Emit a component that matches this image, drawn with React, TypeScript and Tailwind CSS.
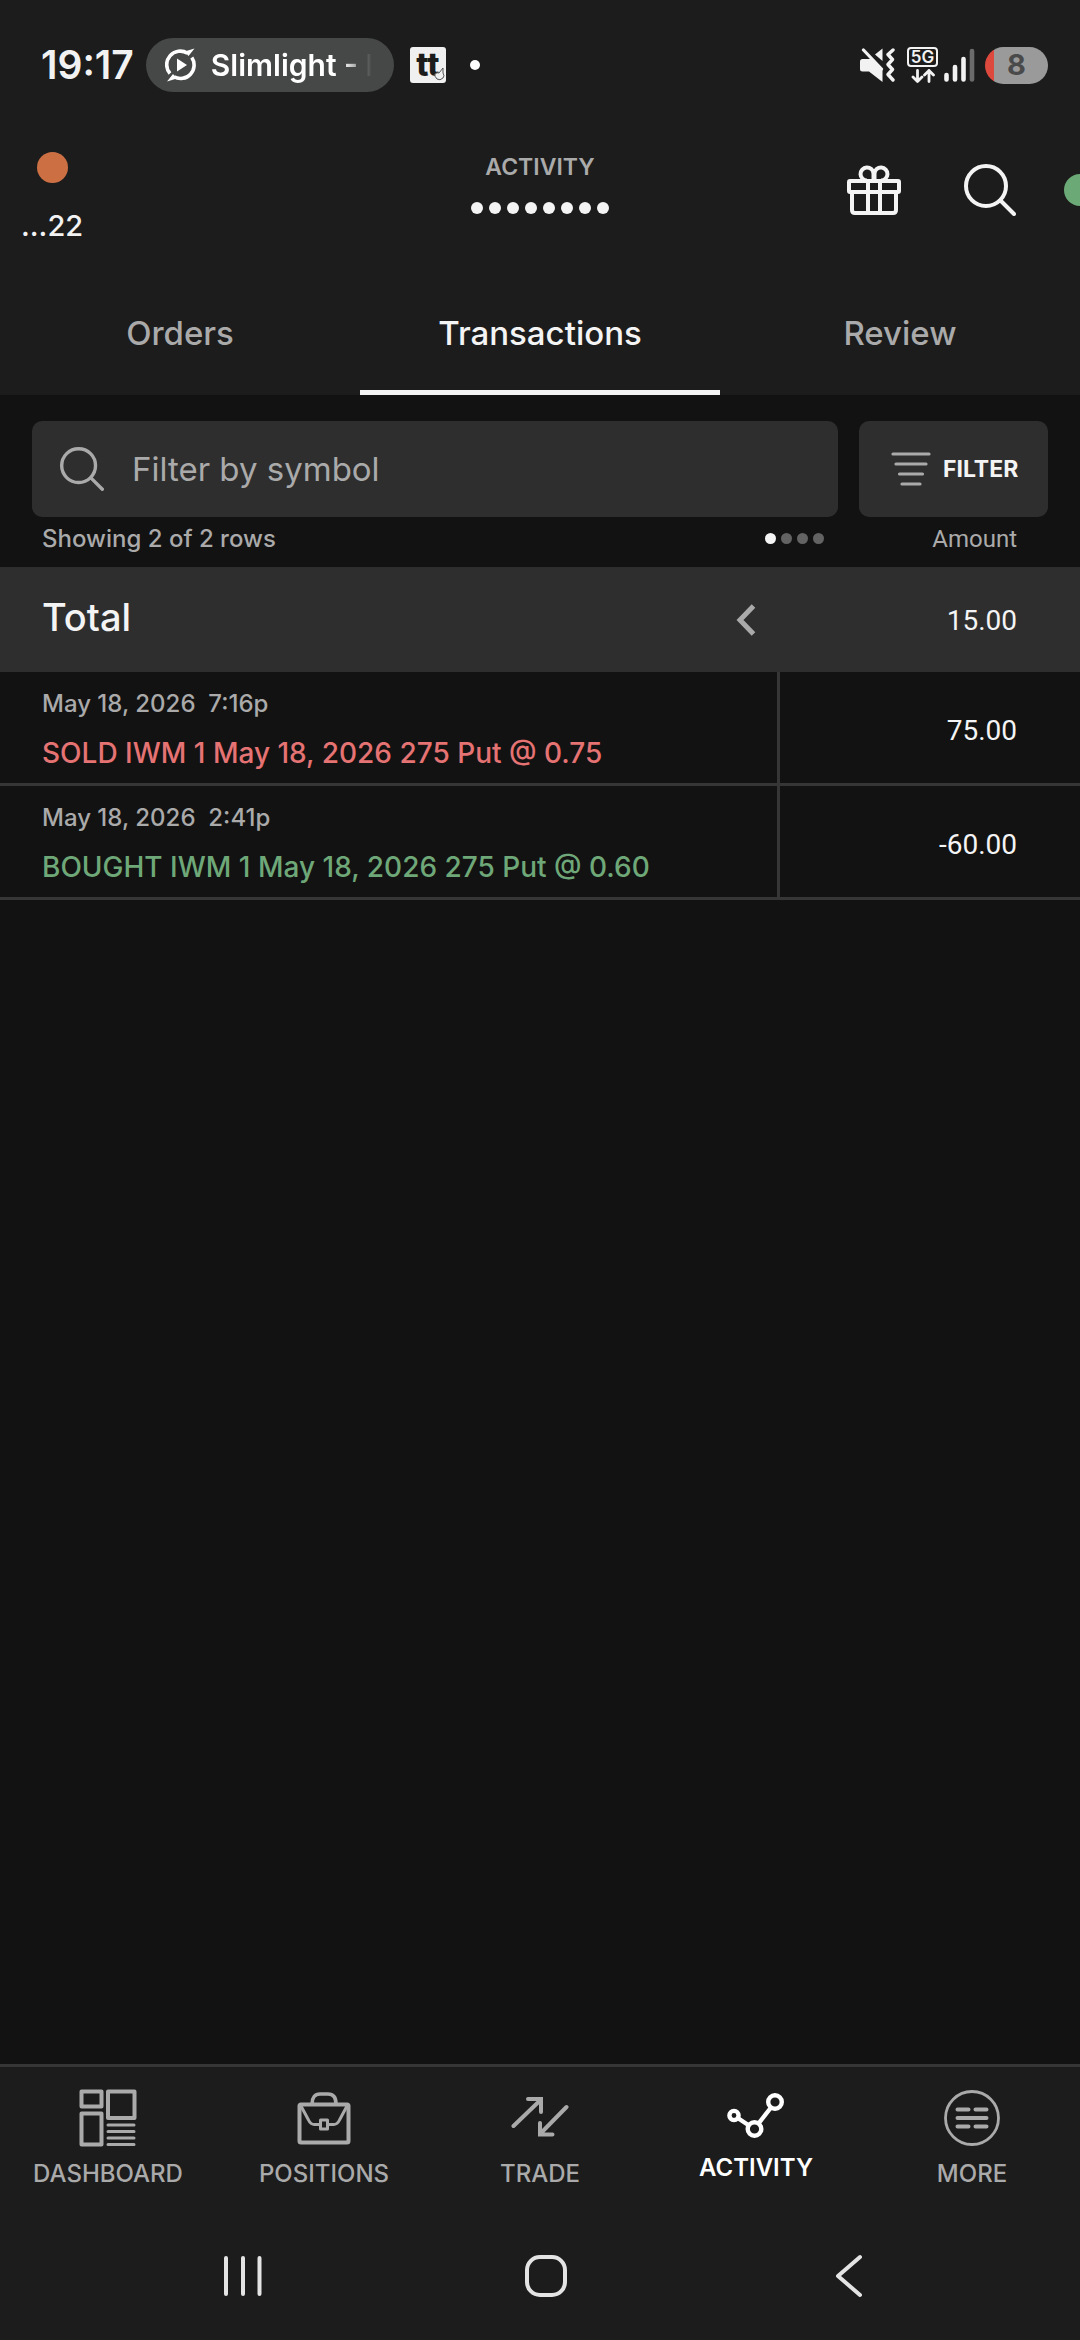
import { useState, type ReactNode } from 'react'

// ─── Data ──────────────────────────────────────────────────────────
type Transaction = {
  id: number
  date: string
  time: string
  side: 'SOLD' | 'BOUGHT'
  detail: string
  amount: string
}

const transactions: Transaction[] = [
  { id: 1, date: 'May 18, 2026', time: '7:16p', side: 'SOLD', detail: 'IWM 1 May 18, 2026 275 Put @ 0.75', amount: '75.00' },
  { id: 2, date: 'May 18, 2026', time: '2:41p', side: 'BOUGHT', detail: 'IWM 1 May 18, 2026 275 Put @ 0.60', amount: '-60.00' },
]

const tabs = ['Orders', 'Transactions', 'Review']

// ─── Icons ─────────────────────────────────────────────────────────
function SearchIcon({ className }: { className: string }) {
  return (
    <svg viewBox="0 0 52 52" fill="none" stroke="currentColor" strokeWidth="4" strokeLinecap="round" className={className}>
      <circle cx="22" cy="22" r="20" />
      <path d="M36.5 36.5 50 50" />
    </svg>
  )
}

function GiftIcon() {
  return (
    <svg viewBox="0 0 54 50" fill="none" stroke="currentColor" strokeWidth="4" strokeLinejoin="round" className="h-[50px] w-[54px]">
      <rect x="2" y="16" width="50" height="11" rx="1" />
      <path d="M5 27v18q0 3 3 3h38q3 0 3-3V27M21 16v32M33 16v32" />
      <path d="M20 15.5a6.500 6.500 0 1 1 6.500-7v7M34 15.5a6.500 6.500 0 1 0-6.500-7v7" />
    </svg>
  )
}

function DashboardIcon() {
  return (
    <svg viewBox="0 0 58 58" fill="none" stroke="currentColor" strokeWidth="4" strokeLinejoin="round" className="h-[58px] w-[58px]">
      <rect x="2.500" y="2.500" width="20" height="15" />
      <rect x="2.500" y="24.500" width="20" height="31" />
      <rect x="29" y="2.500" width="26.500" height="26.500" />
      <path d="M29 36h26M29 42.500h26M29 49h26M29 55.500h26" strokeWidth="3" strokeLinecap="round" />
    </svg>
  )
}

function PositionsIcon() {
  return (
    <svg viewBox="0 0 58 58" fill="none" stroke="currentColor" strokeWidth="4" strokeLinejoin="round" className="h-[58px] w-[58px]">
      <rect x="4.500" y="15.500" width="49" height="38" rx="1.500" />
      <path d="M17 15C17 8.500 20 5 25 5h8c5 0 8 3.500 8 10" strokeWidth="3.600" />
      <path d="M6 17l7.500 14c1.500 3.300 3 4.500 6 4.500H25M52 17l-7.500 14c-1.500 3.300-3 4.500-6 4.500H33" strokeWidth="3" />
      <rect x="25.500" y="31" width="7" height="9" strokeWidth="3" />
    </svg>
  )
}

function TradeIcon() {
  return (
    <svg viewBox="0 0 58 58" fill="none" stroke="currentColor" strokeWidth="4" strokeLinecap="round" className="h-[58px] w-[58px]">
      <path d="M2.500 37 29 11.500M17 10h13v13" />
      <path d="M55.500 18 30 44M29 34v11.500h12.500" />
    </svg>
  )
}

function ActivityIcon() {
  return (
    <svg viewBox="1 0 58 52" fill="none" stroke="currentColor" strokeWidth="4.400" className="h-[52px] w-[58px]">
      <circle cx="8" cy="26.500" r="4.600" />
      <circle cx="28.500" cy="40" r="6.800" />
      <circle cx="49" cy="13" r="6.800" />
      <path d="M12.500 29.500 23 36.500M32.500 34.500 45 18.500" />
    </svg>
  )
}

function MoreIcon() {
  return (
    <svg viewBox="0 0 58 58" fill="none" stroke="currentColor" strokeWidth="4" strokeLinecap="round" className="h-[58px] w-[58px]">
      <circle cx="29" cy="29" r="26.500" strokeWidth="2.800" />
      <path d="M14.500 20.500h11M32.500 20.500h11M14.500 29h29M14.500 37.500h11M32.500 37.500h11" />
    </svg>
  )
}

function MuteIcon() {
  return (
    <svg viewBox="0 0 35 34" fill="currentColor" className="h-[34px] w-[35px]">
      <path d="M2.500 11H11l11.500 10.500V34L9 23.500H2.500Q0 23.500 0 21v-7.500Q0 11 2.500 11zM22.500.5v12.500L15 6.500z" />
      <path d="M3.500 2 21.500 21" fill="none" stroke="currentColor" strokeWidth="3.200" strokeLinecap="round" />
      <path d="M33 2l-5 4.500 4.500 5-4.500 5 4.500 5-4.500 5 5 5.500" fill="none" stroke="currentColor" strokeWidth="3.400" strokeLinecap="round" strokeLinejoin="round" />
    </svg>
  )
}

function DataArrows() {
  return (
    <svg viewBox="0 0 24 14" fill="none" stroke="currentColor" strokeWidth="2.800" strokeLinecap="round" strokeLinejoin="round" className="h-[14px] w-[24px]">
      <path d="M6.500 1.500v11M2 8l4.500 4.500L11 8M18 12.500v-11M13.500 6 18 1.500 22.500 6" />
    </svg>
  )
}

function SignalIcon() {
  return (
    <svg viewBox="0 0 31 34" stroke="currentColor" strokeWidth="4.600" strokeLinecap="round" className="h-[34px] w-[31px]">
      <path d="M2.500 27v4.500M11 19v12.500M19.500 11v20.500" />
      <path d="M28 3v28.500" className="text-[#6b6b6b]" />
    </svg>
  )
}

function MediaIcon() {
  return (
    <svg viewBox="0 0 32 34" fill="none" stroke="currentColor" strokeWidth="3.600" className="h-[34px] w-[32px]">
      <path d="M22.500 5.300A13.500 13.500 0 0 0 5 25.500M9 28.800A13.500 13.500 0 0 0 26.800 9.500" />
      <path d="M19.500 3.500 29.500.5 23.500 8zM12 30.500 2 33.500 8 26z" fill="currentColor" stroke="none" />
      <path d="M12 10.500v13l10-6.500z" fill="currentColor" stroke="none" />
    </svg>
  )
}

// ─── Status bar ────────────────────────────────────────────────────
function StatusBar() {
  return (
    <div className="flex h-[130px] items-center justify-between pl-[41px] pr-8 text-[#f2f2f2]">
      <div className="flex items-center">
        <span className="text-[39px] font-semibold leading-[40px]">19:17</span>
        <div className="ml-3 flex h-[54px] w-[248px] items-center gap-[14px] rounded-full bg-[#464747] pl-[19px] text-white">
          <MediaIcon />
          <span className="w-[164px] overflow-hidden whitespace-nowrap text-[30px] font-semibold leading-[40px] [mask-image:linear-gradient(to_right,black_80%,transparent_98%)]">
            Slimlight - I
          </span>
        </div>
        <div className="relative ml-4 flex h-9 w-9 items-center justify-center rounded-[3px] bg-[#f0f0f0] text-[32px] font-extrabold leading-[32px] text-[#1c1c1c]">
          tt
          <svg viewBox="0 0 12 14" fill="#f0f0f0" stroke="#555555" strokeWidth="1" className="absolute bottom-[2px] right-[1px] h-[14px] w-3">
            <path d="M6 6 10 1v5q2 3 0 5-3 3-6 1Q1 9 2 7q2-2 4-1z" />
          </svg>
        </div>
        <span className="ml-6 h-[10px] w-[10px] rounded-full bg-white" />
      </div>
      <div className="flex items-center">
        <MuteIcon />
        <div className="ml-3 flex w-[31px] flex-col items-center gap-[2px]">
          <span className="flex h-5 w-[31px] items-center justify-center rounded-[4px] border-2 border-[#f2f2f2] text-[17px] font-semibold leading-[16px]">
            5G
          </span>
          <DataArrows />
        </div>
        <div className="ml-[6px]">
          <SignalIcon />
        </div>
        <div className="ml-[10px] flex h-[37px] w-[63px] items-center justify-center rounded-full bg-[linear-gradient(to_right,#dd4a3d_15%,#9a9a9a_15%)] text-[29px] font-bold leading-[32px] text-[#4a4a4a]">
          8
        </div>
      </div>
    </div>
  )
}

// ─── Header ────────────────────────────────────────────────────────
function Header() {
  return (
    <header className="grid h-[140px] grid-cols-3 items-start overflow-hidden pt-[22px]">
      <button className="flex flex-col items-start gap-[27px] pl-[21px] text-[29px] font-medium leading-[32px] text-[#f2f2f2]">
        <span className="ml-4 h-[31px] w-[31px] rounded-full bg-[#cc7044]" />
        ...22
      </button>
      <div className="flex flex-col items-center gap-5">
        <h1 className="text-[23px] font-semibold leading-[30px] text-[#aaaaaa]">ACTIVITY</h1>
        <div className="flex gap-[6px]">
          {Array.from({ length: 8 }, (_, i) => (
            <span key={i} className="h-3 w-3 rounded-full bg-[#f4f4f4]" />
          ))}
        </div>
      </div>
      <div className="-mr-4 flex items-center justify-end gap-12 pt-3 text-[#f4f4f4]">
        <button aria-label="Rewards">
          <GiftIcon />
        </button>
        <button aria-label="Search" className="pl-[15px]">
          <SearchIcon className="h-[52px] w-[52px]" />
        </button>
        <span className="h-8 w-8 rounded-full bg-[#6ba977]" />
      </div>
    </header>
  )
}

// ─── Bottom navigation ─────────────────────────────────────────────
const navItems: { label: string; icon: ReactNode }[] = [
  { label: 'DASHBOARD', icon: <DashboardIcon /> },
  { label: 'POSITIONS', icon: <PositionsIcon /> },
  { label: 'TRADE', icon: <TradeIcon /> },
  { label: 'ACTIVITY', icon: <ActivityIcon /> },
  { label: 'MORE', icon: <MoreIcon /> },
]

function BottomNav() {
  return (
    <nav className="grid h-[148px] grid-cols-5 items-start border-t-[3px] border-[#363636] pt-[22px]">
      {navItems.map((item) => {
        const isActive = item.label === 'ACTIVITY'
        return (
          <a
            key={item.label}
            href={`#${item.label.toLowerCase()}`}
            className={`flex flex-col items-center gap-3 text-[24px] leading-[30px] ${
              isActive ? 'font-semibold text-white' : 'font-medium text-[#aaaaaa]'
            }`}
          >
            {item.icon}
            {item.label}
          </a>
        )
      })}
    </nav>
  )
}

function SystemNav() {
  return (
    <div className="flex h-32 items-center justify-around pl-[92px] pr-20 text-[#e4e4e4]">
      <button aria-label="Recents">
        <svg viewBox="0 0 44 44" fill="none" stroke="currentColor" strokeWidth="4" strokeLinecap="round" className="h-11 w-11">
          <path d="M5 4v36M22 4v36M38.500 4v36" />
        </svg>
      </button>
      <button aria-label="Home">
        <svg viewBox="0 0 44 44" fill="none" stroke="currentColor" strokeWidth="4" className="h-11 w-11">
          <rect x="3" y="3" width="38" height="38" rx="13" />
        </svg>
      </button>
      <button aria-label="Back">
        <svg viewBox="0 0 44 44" fill="none" stroke="currentColor" strokeWidth="4" strokeLinecap="round" strokeLinejoin="round" className="h-11 w-11">
          <path d="M33 3 11 22l22 19" />
        </svg>
      </button>
    </div>
  )
}

// ─── Transactions table ────────────────────────────────────────────
function TransactionsTable() {
  return (
    <table className="w-full border-separate border-spacing-0 text-left">
      <thead>
        <tr className="text-[24px] leading-[30px] text-[#aaaaaa]">
          <th className="p-0 pl-[42px] font-medium">
            <div className="flex h-[50px] items-start justify-between pt-[7px]">
              Showing {transactions.length} of {transactions.length} rows
              <span className="mr-[-44px] flex gap-[5px] pt-[9px]">
                <span className="h-[11px] w-[11px] rounded-full bg-[#f4f4f4]" />
                <span className="h-[11px] w-[11px] rounded-full bg-[#636363]" />
                <span className="h-[11px] w-[11px] rounded-full bg-[#636363]" />
                <span className="h-[11px] w-[11px] rounded-full bg-[#636363]" />
              </span>
            </div>
          </th>
          <th className="w-[300px] p-0 pr-[63px] text-right font-['Roboto',sans-serif] font-normal">
            <div className="h-[50px] pt-[7px]">Amount</div>
          </th>
        </tr>
      </thead>
      <tbody>
        <tr className="h-[105px] bg-[#2e2e2e] text-[#f4f4f4]">
          <th className="p-0 pl-[42px] pr-6 font-medium">
            <div className="flex items-center justify-between text-[38px] leading-[46px]">
              <span className="pb-[6px]">Total</span>
              <button aria-label="Show more columns" className="text-[#aaaaaa]">
                <svg viewBox="0 0 20 32" fill="none" stroke="currentColor" strokeWidth="5" className="h-8 w-5">
                  <path d="M17.500 2 4 16l13.500 14" />
                </svg>
              </button>
            </div>
          </th>
          <td className="p-0 pr-[63px] pt-[2px] text-right font-['Roboto',sans-serif] text-[28px] leading-[34px]">15.00</td>
        </tr>
        {transactions.map((t) => (
          <tr key={t.id} className="h-[114px]">
            <td className="border-b-[3px] border-r-[3px] border-[#363636] p-0 pl-[42px] pt-1">
              <p className="whitespace-pre text-[24px] font-medium leading-[30px] text-[#aaaaaa]">
                {t.date}{'  '}{t.time}
              </p>
              <p
                className={`mt-[17px] text-[28px] font-medium leading-[34px] ${
                  t.side === 'SOLD' ? 'text-[#e57373]' : 'text-[#6fa878]'
                }`}
              >
                {t.side} {t.detail}
              </p>
            </td>
            <td className="border-b-[3px] border-[#363636] p-0 pr-[63px] pt-[6px] text-right font-['Roboto',sans-serif] text-[28px] leading-[34px] text-[#f4f4f4]">
              {t.amount}
            </td>
          </tr>
        ))}
      </tbody>
    </table>
  )
}

// ─── App ───────────────────────────────────────────────────────────
export default function App() {
  const [activeTab, setActiveTab] = useState('Transactions')
  const [symbol, setSymbol] = useState('')

  return (
    <div className="flex min-h-screen flex-col bg-[#1c1c1c] font-['Inter',sans-serif]">
      <StatusBar />
      <Header />

      {/* Tabs */}
      <div className="grid h-[125px] grid-cols-3">
        {tabs.map((tab) => (
          <button
            key={tab}
            onClick={() => setActiveTab(tab)}
            className={`border-b-[5px] pt-[6px] text-[33px] font-medium leading-[42px] ${
              tab === activeTab ? 'border-[#f4f4f4] text-[#f4f4f4]' : 'border-transparent text-[#aaaaaa]'
            }`}
          >
            {tab}
          </button>
        ))}
      </div>

      <main className="flex-1 bg-[#121212]">
        {/* Symbol filter */}
        <div className="flex gap-[21px] px-8 pt-[26px]">
          <label className="flex h-24 flex-1 items-center gap-7 rounded-[10px] bg-[#2e2e2e] pl-7 text-[#aaaaaa]">
            <SearchIcon className="h-11 w-11" />
            <input
              type="text"
              value={symbol}
              onChange={(e) => setSymbol(e.target.value)}
              placeholder="Filter by symbol"
              aria-label="Filter by symbol"
              className="min-w-0 flex-1 bg-transparent text-[33px] leading-[42px] outline-none placeholder:text-[#aaaaaa]"
            />
          </label>
          <button className="flex h-24 w-[189px] items-center gap-3 rounded-[10px] bg-[#2e2e2e] pl-8 text-[23px] font-bold leading-[30px] text-[#f4f4f4]">
            <svg viewBox="0 0 40 36" fill="none" stroke="currentColor" strokeWidth="3.200" strokeLinecap="round" className="h-9 w-10 text-[#aaaaaa]">
              <path d="M2 3h36M5 13h30M8.500 23h23M11 33h18" />
            </svg>
            FILTER
          </button>
        </div>
        <TransactionsTable />
      </main>

      <BottomNav />
      <SystemNav />
    </div>
  )
}
